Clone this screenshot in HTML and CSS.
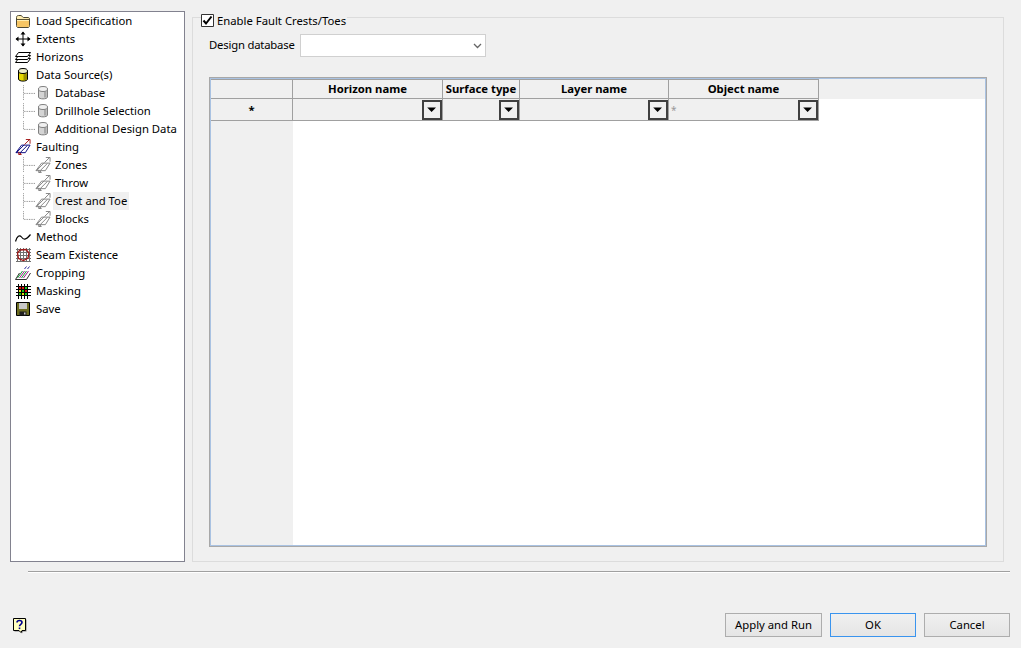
FILE: index.html
```html
<!DOCTYPE html>
<html lang="en">
<head>
<meta charset="utf-8">
<title>Fault Crests and Toes</title>
<link rel="stylesheet" href="styles.css">
</head>
<body>
<svg class="defs" width="0" height="0">
  <defs>
    <symbol id="i-fault" viewBox="0 0 16 17">
      <path d="M6.500 6.500H15.500L10.500 14.500H0.500Z" fill="none" stroke="currentColor"/>
      <path d="M1 14.500L9 6.500M5 14.500L12.500 7" stroke="currentColor" fill="none"/>
      <path d="M9.500 6L15 0.500M11 0.500H15.500V5" stroke="var(--a,#000)" fill="none"/>
      <path d="M6 15L3.500 16.500M3.500 13.500V16.500H6.500" stroke="var(--b,#000)" fill="none"/>
    </symbol>
    <symbol id="i-cyl" viewBox="0 0 16 16">
      <path d="M3.500 4V12C3.500 14.500 12.500 14.500 12.500 12V4" fill="#d4d4d4" stroke="#808080"/>
      <path d="M9 6.500H11.500V12.500H9Z" fill="#a8a8a8"/>
      <ellipse cx="8" cy="4" rx="4.500" ry="2.500" fill="#f0f0f0" stroke="#808080"/>
    </symbol>
    <symbol id="i-conn" viewBox="0 0 14 18">
      <path d="M0.500 0V18M1 9.500H14" stroke="#707070" stroke-dasharray="1 1" fill="none"/>
    </symbol>
    <symbol id="i-conn-end" viewBox="0 0 14 18">
      <path d="M0.500 0V9.500M1 9.500H14" stroke="#707070" stroke-dasharray="1 1" fill="none"/>
    </symbol>
    <symbol id="i-drop" viewBox="0 0 20 20">
      <path d="M4 7H15L9.500 12.500Z" fill="#000"/>
    </symbol>
  </defs>
</svg>

<div class="dialog">
  <div class="main">
    <nav class="tree">
      <div class="node">
        <svg class="ico" viewBox="0 0 16 16"><path d="M1.500 4.500C1.500 3 2.500 2.500 3.500 2.500H6C7 2.500 7.500 4.500 8.500 4.500H13C14 4.500 14.500 5 14.500 6V12.500C14.500 13.500 14 14.500 13 14.500H3C2 14.500 1.500 13.500 1.500 12.500Z" fill="#ffedb0" stroke="#4a4632"/><path d="M2 8H14V12.500C14 13.500 13.500 14 13 14H3C2.500 14 2 13.500 2 12.500Z" fill="#f6c564"/><path d="M2 6.500H14" stroke="#5a5236"/></svg>
        <span class="label">Load Specification</span>
      </div>
      <div class="node">
        <svg class="ico" viewBox="0 0 16 16"><path d="M8 1V15M1 8H15" stroke="#000" fill="none"/><path d="M8 0.500L5.500 3.500H10.500ZM8 15.500L5.500 12.500H10.500ZM0.500 8L3.500 5.500V10.500ZM15.500 8L12.500 5.500V10.500Z" fill="#000"/></svg>
        <span class="label">Extents</span>
      </div>
      <div class="node">
        <svg class="ico" viewBox="0 0 16 16"><g fill="#fff" stroke="#000"><path d="M3.500 9.500H15.500L12.500 13.500H0.500Z"/><path d="M3.500 6.500H15.500L12.500 10.500H0.500Z"/><path d="M3.500 3.500H15.500L12.500 7.500H0.500Z"/></g></svg>
        <span class="label">Horizons</span>
      </div>
      <div class="node">
        <svg class="ico" viewBox="0 0 16 16"><path d="M3.500 4V12C3.500 14.800 12.500 14.800 12.500 12V4" fill="#e6d800" stroke="#000"/><path d="M8.500 6.500H12V13H8.500Z" fill="#9a9000"/><ellipse cx="8" cy="4" rx="4.500" ry="2.500" fill="#ededc8" stroke="#000"/></svg>
        <span class="label">Data Source(s)</span>
      </div>
      <div class="node child"><svg class="conn"><use href="#i-conn"/></svg><svg class="ico"><use href="#i-cyl"/></svg><span class="label">Database</span></div>
      <div class="node child"><svg class="conn"><use href="#i-conn"/></svg><svg class="ico"><use href="#i-cyl"/></svg><span class="label">Drillhole Selection</span></div>
      <div class="node child"><svg class="conn"><use href="#i-conn-end"/></svg><svg class="ico"><use href="#i-cyl"/></svg><span class="label">Additional Design Data</span></div>
      <div class="node">
        <svg class="ico fault"><use href="#i-fault"/></svg>
        <span class="label">Faulting</span>
      </div>
      <div class="node child"><svg class="conn"><use href="#i-conn"/></svg><svg class="ico muted"><use href="#i-fault"/></svg><span class="label">Zones</span></div>
      <div class="node child"><svg class="conn"><use href="#i-conn"/></svg><svg class="ico muted"><use href="#i-fault"/></svg><span class="label">Throw</span></div>
      <div class="node child"><svg class="conn"><use href="#i-conn"/></svg><svg class="ico muted"><use href="#i-fault"/></svg><span class="label selected">Crest and Toe</span></div>
      <div class="node child"><svg class="conn"><use href="#i-conn-end"/></svg><svg class="ico muted"><use href="#i-fault"/></svg><span class="label">Blocks</span></div>
      <div class="node">
        <svg class="ico" viewBox="0 0 16 16"><path d="M0.500 12.500C2 7 4.500 5.500 6.500 8C8.500 11 10.500 11.500 15.500 5.500" fill="none" stroke="#000" stroke-width="1.200"/></svg>
        <span class="label">Method</span>
      </div>
      <div class="node">
        <svg class="ico" viewBox="0 0 16 16"><path d="M2.500 1V15M5.500 1V15M8.500 1V15M11.500 1V15M14.500 1V15M1 2.500H16M1 5.500H16M1 8.500H16M1 11.500H16M1 14.500H16" stroke="#707070" fill="none"/><path d="M5 3L11 2.500L14 6L13 11L8.500 13.500L3.500 11.500L2.500 6Z" fill="none" stroke="#a01818" stroke-width="1.300"/></svg>
        <span class="label">Seam Existence</span>
      </div>
      <div class="node">
        <svg class="ico" viewBox="0 0 16 16"><path d="M0.500 14.500H11.500L15.500 8M0.500 14.500L4.500 8" stroke="#303030" fill="none"/><path d="M2.500 13L7.500 6M6.500 13L11.500 6" stroke="#129a32" fill="none"/><path d="M4.500 13L9.500 6M8.500 13L13.500 6" stroke="#a01c8c" fill="none"/><path d="M9.500 4L11.500 1.500M12.500 4L14.500 1.500" stroke="#3030a0" fill="none"/></svg>
        <span class="label">Cropping</span>
      </div>
      <div class="node">
        <svg class="ico" viewBox="0 0 16 16"><path d="M4 4H7V7H4Z" fill="#e01010"/><path d="M7 4H10V7H7Z" fill="#e01010"/><path d="M10 4H13V7H10Z" fill="#18c818"/><path d="M4 7H7V10H4Z" fill="#f0e010"/><path d="M7 7H10V10H7Z" fill="#18c818"/><path d="M10 7H13V10H10Z" fill="#e01010"/><path d="M4 10H7V13H4Z" fill="#18c818"/><path d="M7 10H10V13H7Z" fill="#f0e010"/><path d="M10 10H13V13H10Z" fill="#18c818"/><path d="M3.500 1V16M6.500 1V16M9.500 1V16M12.500 1V16M1 3.500H16M1 6.500H16M1 9.500H16M1 12.500H16" stroke="#000" fill="none"/></svg>
        <span class="label">Masking</span>
      </div>
      <div class="node">
        <svg class="ico" viewBox="0 0 16 16"><path d="M1.500 1.500H14.500V14.500H1.500Z" fill="#6c6c20" stroke="#000"/><path d="M4 2H12V8H4Z" fill="#c8c8c8"/><path d="M4.500 10.500H11.500V14.500H4.500Z" fill="#202020"/><path d="M9 11.500H10.500V13.500H9Z" fill="#c8c8c8"/></svg>
        <span class="label">Save</span>
      </div>
    </nav>

    <fieldset class="panel">
      <legend class="legend">
        <label class="check">
          <svg class="checkbox" viewBox="0 0 13 13"><path d="M0.500 0.500H12.500V12.500H0.500Z" fill="#fff" stroke="#333"/><path d="M2.500 6.500L5 9.500L10.500 2.500" fill="none" stroke="#000" stroke-width="2"/></svg>
          <span>Enable Fault Crests/Toes</span>
        </label>
      </legend>

      <div class="field">
        <span class="field-label">Design database</span>
        <div class="select">
          <svg class="chev" viewBox="0 0 9 6"><path d="M1 1L4.500 4.500L8 1" fill="none" stroke="#666" stroke-width="1.300"/></svg>
        </div>
      </div>

      <div class="grid">
        <div class="grid-row head">
          <div class="cell c0"></div>
          <div class="cell c1">Horizon name</div>
          <div class="cell c2">Surface type</div>
          <div class="cell c3">Layer name</div>
          <div class="cell c4">Object name</div>
        </div>
        <div class="grid-row data">
          <div class="cell c0 star">*</div>
          <div class="cell c1"><button class="drop"><svg class="drop-ico"><use href="#i-drop"/></svg></button></div>
          <div class="cell c2"><button class="drop"><svg class="drop-ico"><use href="#i-drop"/></svg></button></div>
          <div class="cell c3"><button class="drop"><svg class="drop-ico"><use href="#i-drop"/></svg></button></div>
          <div class="cell c4"><span class="placeholder">*</span><button class="drop"><svg class="drop-ico"><use href="#i-drop"/></svg></button></div>
        </div>
        <div class="grid-fill"><div class="fill-gutter"></div></div>
      </div>
    </fieldset>
  </div>

  <div class="rule"></div>

  <div class="footer">
    <svg class="help" viewBox="0 0 15 17"><path d="M2.500 2.500H14.500V14.500H11L10 16.500L8 14.500H2.500Z" fill="#808080"/><path d="M1.500 1.500H13.500V13.500H10L9 15.500L7 13.500H1.500Z" fill="#ffffc0" stroke="#000"/><path d="M5 5.500C5 2.800 10 2.800 10 5.500C10 7.500 7.500 7.300 7.500 9.300" fill="none" stroke="#000090" stroke-width="1.600"/><path d="M6.700 10.500H8.300V12.100H6.700Z" fill="#000090"/></svg>
    <div class="buttons">
      <button class="btn apply">Apply and Run</button>
      <button class="btn ok">OK</button>
      <button class="btn cancel">Cancel</button>
    </div>
  </div>
</div>
</body>
</html>
```

FILE: styles.css
```css
* { box-sizing: border-box; }
html, body { margin: 0; height: 100%; }
body {
  background: #f0f0f0;
  color: #000;
  font-family: "Noto Sans", "Open Sans", "Liberation Sans", sans-serif;
  font-size: 11.3px;
  overflow: hidden;
}
.defs { display: block; }
.dialog { height: 648px; display: flex; flex-direction: column; padding: 11px 11px 11px 10px; }
.main { display: flex; gap: 7px; height: 551px; margin-right: 6px; }

.tree {
  width: 175px;
  height: 551px;
  flex: none;
  background: #fff;
  border: 1px solid #82828f;
  padding: 0 0 0 4px;
}
.node { display: flex; align-items: center; height: 18px; }
.node .ico { width: 16px; height: 16px; flex: none; }
.node > .ico + .label { margin-left: 5px; }
.child { padding-left: 8px; }
.conn { width: 12px; height: 18px; flex: none; }
.child > .ico + .label { margin-left: 2px; padding: 0 2px; }
.label { white-space: nowrap; line-height: 18px; }
.selected { background: #f0f0f0; }
.fault { color: #00007c; --a: #a01010; --b: #a01010; }
.muted { color: #808080; --a: #808080; --b: #808080; }

.panel {
  flex: 1;
  min-width: 0;
  margin: 2px 0 0;
  padding: 0 16px 14px 16px;
  border: 1px solid #dcdcdc;
  display: flex;
  flex-direction: column;
}
.legend { padding: 0; margin-left: -8px; height: 8px; }
.check { display: flex; align-items: center; gap: 3px; height: 15px; padding-right: 1px; }
.checkbox { width: 13px; height: 13px; flex: none; }

.field { display: flex; align-items: center; margin-top: 13px; height: 23px; flex: none; }
.field-label { width: 91px; flex: none; padding-bottom: 3px; white-space: nowrap; letter-spacing: -0.2px; }
.select {
  width: 186px;
  height: 23px;
  background: #fff;
  border: 1px solid #d0d0d0;
  display: flex;
  align-items: center;
  justify-content: flex-end;
  padding-right: 3px;
}
.chev { width: 9px; height: 6px; }

.grid {
  margin-top: 20px;
  flex: 1;
  min-height: 0;
  display: flex;
  flex-direction: column;
  background: #fff;
  border: 2px solid #a9c2e2;
  outline: 1px solid #a8a8a8;
  outline-offset: -1px;
}
.grid-row { display: flex; flex: none; }
.head { height: 20px; background: #f0f0f0; font-weight: 700; }
.data { height: 22px; }
.cell {
  flex: none;
  background: #f0f0f0;
  border-right: 1px solid #a0a0a0;
  border-bottom: 1px solid #a0a0a0;
  display: flex;
  align-items: center;
  justify-content: center;
  white-space: nowrap;
}
.head .cell { border-top: 1px solid #a0a0a0; padding-bottom: 1px; }
.data .cell { justify-content: flex-end; }
.data .cell.star { justify-content: center; font-weight: 700; padding-bottom: 1px; }
.c0 { width: 82px; }
.c1 { width: 150px; }
.c2 { width: 77px; }
.c3 { width: 149px; }
.c4 { width: 150px; }
.placeholder { margin-right: auto; padding-left: 2px; color: #999; font-size: 10px; line-height: 1; }
.drop {
  width: 20px;
  height: 20px;
  margin: 0;
  padding: 0;
  background: #f0f0f0;
  border: 2px solid #404040;
  display: block;
}
.drop-ico { width: 16px; height: 16px; display: block; }
.grid-fill { flex: 1; display: flex; min-height: 0; }
.fill-gutter { width: 82px; background: #f0f0f0; }

.rule {
  margin: 9px 0 0 18px;
  height: 2px;
  border-top: 1px solid #a0a0a0;
  border-bottom: 1px solid #fff;
  flex: none;
}
.footer {
  flex: 1;
  display: flex;
  align-items: flex-end;
  justify-content: space-between;
  padding-left: 2px;
}
.help { width: 15px; height: 17px; margin-bottom: 3px; }
.buttons { display: flex; gap: 8px; }
.btn {
  height: 24px;
  margin: 0;
  padding: 0 0 1px;
  background: linear-gradient(#f0f0f0, #e5e5e5);
  border: 1px solid #adadad;
  color: #000;
  font: inherit;
}
.apply { width: 97px; }
.ok { width: 86px; border-color: #3a94ee; }
.cancel { width: 86px; }
```
